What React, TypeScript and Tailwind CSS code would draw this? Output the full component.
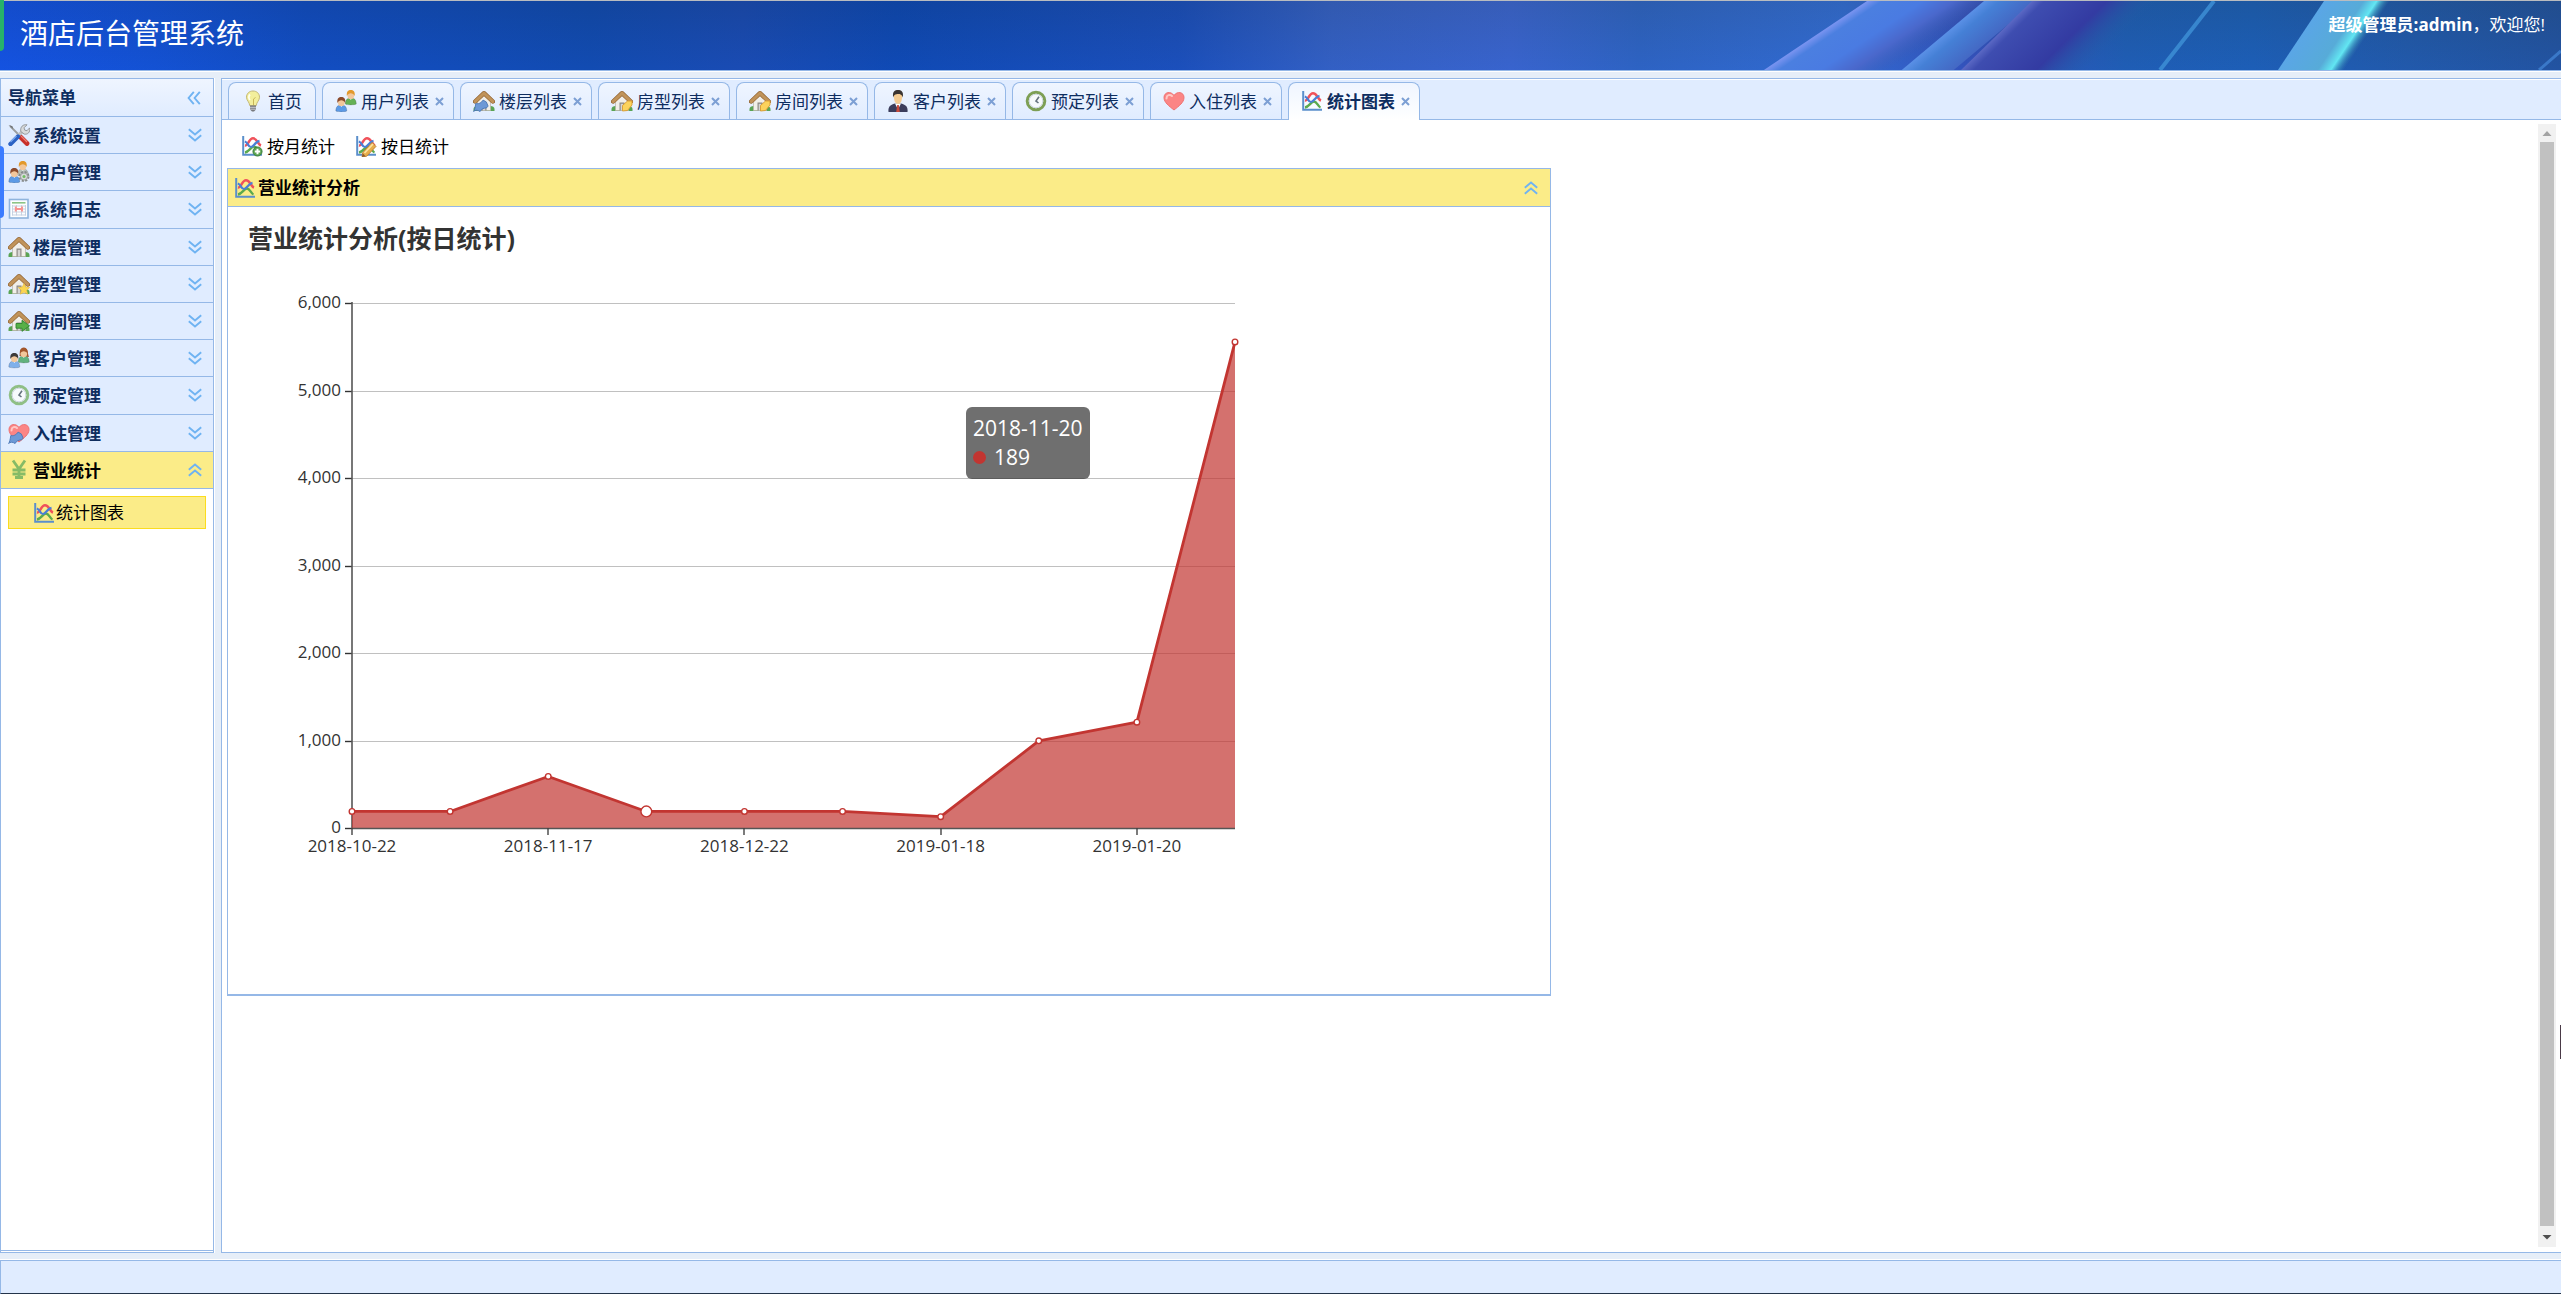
import { useState, type ReactNode } from "react";
import clsx from "clsx";

const House = ({ children }: { children?: ReactNode }) => (
  <>
    <path d="M.5 19c0-2 2-3 4-3h13c2 0 4 1 4 3v2H.5z" fill="#5aa454" />
    <path d="M4.5 10L11 4l6.5 6v10.5h-13z" fill="#f1efe9" stroke="#b9b2a5" strokeWidth=".7" />
    <path d="M8.500 12.500h5v8h-5z" fill="#8d8b86" />
    <path d="M9.700 13.800h2.600v6.700H9.700z" fill="#d5d4d2" />
    <path d="M2.200 11.500L11 3.200l8.800 8.300" fill="none" stroke="#8a5a26" strokeWidth="4.4" strokeLinejoin="round" strokeLinecap="round" />
    <path d="M2.200 11.500L11 3.200l8.800 8.300" fill="none" stroke="#c0935a" strokeWidth="3.2" strokeLinejoin="round" strokeLinecap="round" />
    {children}
  </>
);

const Pencil = () => (
  <>
    <path d="M7.500 17.800L17 7.400l4 4-9.300 9.800-4.500.8z" fill="#e8ae4c" stroke="#b97f35" strokeWidth=".9" />
    <path d="M9.500 18l8.500-9" stroke="#fbe3a0" strokeWidth="1.8" />
    <path d="M6.800 22l1.200-3.400 2.500 2.600z" fill="#8c5a2c" />
  </>
);

const Bell = () => (
  <path d="M.6 21.500c1.200-1.500 1.500-4 2.200-8 2.600.6 5-.2 7.300-3.400l3.200 1.800 1.800 4.200-1.600 1.800c-3 .2-5 .8-6.400 3.600-2.500-1.800-5-1.500-6.500 0z" fill="#6d99d6" stroke="#4a76b4" strokeWidth=".9" />
);

const Graph = ({ children }: { children?: ReactNode }) => (
  <>
    <path d="M2.200 1v18.700H21" fill="none" stroke="#5b8fcb" strokeWidth="2" />
    <path d="M4 17.500C8 17 10 11.500 13 11.500s4 5 6.500 6" fill="none" stroke="#5caa4e" strokeWidth="2.400" />
    <path d="M4 10.500C7 11 8 3.300 12 3.300S17 9.500 20 10.500" fill="none" stroke="#f0525a" strokeWidth="2.600" />
    <path d="M3.800 6.500c3.400 1 3.200 5.500 6.200 5.500s4-5.500 8.500-6.200" fill="none" stroke="#4a7fd6" strokeWidth="2.200" />
    {children}
  </>
);

const Person = ({ x, y, hair, shirt }: { x: number; y: number; hair: string; shirt: string }) => (
  <g transform={`translate(${x} ${y})`}>
    <path d="M.3 14c0-4 1.700-6 5.500-6s5.500 2 5.500 6c-2 1.200-9 1.200-11 0z" fill={shirt} stroke="#00000040" strokeWidth=".6" />
    <path d="M4.400 8l1.400 2 1.400-2z" fill="#fff" />
    <ellipse cx="5.800" cy="5.200" rx="3.400" ry="3.900" fill="#f2c79b" />
    <path d="M1.900 6C1.300 1.500 3.300 0 5.800 0s4.500 1.500 3.900 6C8.800 4 7.400 3.200 5.800 3.200S2.800 4 1.900 6z" fill={hair} />
  </g>
);

const Clock = ({ rim }: { rim: string }) => (
  <>
    <circle cx="11" cy="11" r="8.800" fill="#f7fafc" stroke={rim} strokeWidth="3" />
    <circle cx="11" cy="11" r="6.800" fill="none" stroke="#ccd6e0" strokeWidth="1" />
    <path d="M14 6.800L11 11l2.500 2" fill="none" stroke="#65727e" strokeWidth="1.600" />
  </>
);

const Heart = ({ children }: { children?: ReactNode }) => (
  <>
    <path d="M11 20C6 16 1 12.500 1 7.500 1 2 8 .8 11 5.500 14 .8 21 2 21 7.500c0 5-5 8.500-10 12.500z" fill="#fb8585" stroke="#ef7272" />
    <path d="M3.500 8.500c0-3.500 3.500-4.500 5.500-2.500" fill="none" stroke="#ffc7c4" strokeWidth="2" strokeLinecap="round" />
    {children}
  </>
);

const drawings: Record<string, ReactNode> = {
  bulb: (
    <>
      <path d="M11 1c-4 0-6.500 2.800-6.500 6.200 0 3.300 3 4.800 3.200 8.300h6.600c.2-3.500 3.200-5 3.200-8.300C17.500 3.800 15 1 11 1z" fill="#f3ef9c" stroke="#c4b878" />
      <path d="M8 4.500c-1.500 1.500-1.300 4 0 5.500" stroke="#fffff0" strokeWidth="1.800" fill="none" />
      <path d="M11.500 15V9l2-1.500" stroke="#c9b75a" fill="none" />
      <path d="M8 15.500h6v4l-2 2h-2l-2-2z" fill="#77797d" />
      <path d="M8 17.300h6M8 19.200h6" stroke="#c9cbd0" />
    </>
  ),
  users: (
    <>
      <Person x={10} y={0} hair="#e2992c" shirt="#65b155" />
      <Person x={0.500} y={7} hair="#8c4a2b" shirt="#5c9ae6" />
    </>
  ),
  usersGear: (
    <>
      <Person x={9} y={0} hair="#e2992c" shirt="#b7c0b8" />
      <Person x={0.500} y={7} hair="#8c4a2b" shirt="#5c9ae6" />
      <circle cx="16" cy="15.500" r="4.200" fill="#d6d8d8" stroke="#858a8b" strokeWidth="2.600" strokeDasharray="2 1.300" />
      <circle cx="16" cy="15.500" r="3.600" fill="#d6d8d8" stroke="#9a9e9f" />
      <circle cx="16" cy="15.500" r="1.500" fill="#6fbd62" />
    </>
  ),
  couple: (
    <>
      <path d="M11.500 9c.7-3 .2-8.500 4.300-8.500S19.500 6 21 10z" fill="#a2562c" />
      <Person x={10} y={1} hair="#a2562c" shirt="#62b27e" />
      <Person x={0.500} y={6} hair="#3d3a3a" shirt="#7fb0ea" />
    </>
  ),
  suit: (
    <>
      <path d="M1.500 22c-.6-5 1.500-7.300 6.500-8.500h6c5 1.200 7.100 3.500 6.500 8.500z" fill="#3b3d5c" />
      <path d="M8 13.500l3 6 3-6z" fill="#fff" />
      <path d="M10.200 15h1.600l1 7H9.200z" fill="#c84a3c" />
      <path d="M6.800 5c0-2.500 8.400-2.500 8.400 0 0 5-1.200 9-4.200 9S6.800 10 6.800 5z" fill="#f4cb92" />
      <path d="M6.300 7.500C5 1.500 8 0 11 0s6 1.500 4.700 7.500C15 4.500 13 4 11 4s-4 .5-4.700 3.500z" fill="#3a3431" />
    </>
  ),
  tools: (
    <>
      <path d="M2 2l10 10" stroke="#9b9d9f" strokeWidth="1.800" />
      <path d="M.5 1l4 1.200L5.200 5z" fill="#6f7275" />
      <path d="M11.500 12l7.500 7.500" stroke="#c7302b" strokeWidth="4.800" strokeLinecap="round" />
      <path d="M13 12l6 6" stroke="#f07d70" strokeWidth="1.200" />
      <path d="M9 12.500L16 6" stroke="#bfc2c4" strokeWidth="3.200" />
      <path d="M19 .8l-3 3 .8 2.400 2.200.5 2.600-2.800c.9 4.500-2 6.800-5.400 6.200l-3.400-2.600C12 3 15 0 19 .8z" fill="#d8dadb" stroke="#8c9092" strokeWidth=".9" />
      <path d="M10 12.500l-7.500 7.500" stroke="#2b62c4" strokeWidth="4.400" strokeLinecap="round" />
      <path d="M8.500 12l-6 6" stroke="#7ba8ef" strokeWidth="1.200" />
    </>
  ),
  log: (
    <>
      <rect x="1.500" y="1.500" width="18.500" height="18.500" fill="#fdfeff" stroke="#8fb4dd" strokeWidth="1.600" />
      <path d="M4 4.800h13.500" stroke="#8cc486" strokeWidth="1.600" />
      <path d="M4 8h14M4 11h14M4 14h14M4 17h14M4.500 7v10.500M8.500 7v10.500M13.500 7v10.500M17.500 7v10.500" stroke="#c3cfdf" strokeWidth=".9" />
      <path d="M7.800 8.500v5M14 8.500v5M7.800 11h6.400" stroke="#f7928e" strokeWidth="1.900" />
    </>
  ),
  house: <House />,
  houseStar: (
    <House>
      <path d="M16 10.500l1.700 3.600 4 .4-3 2.700.9 4-3.600-2.100-3.600 2.100.9-4-3-2.700 4-.4z" fill="#fbd651" stroke="#e9b93b" strokeWidth=".6" />
    </House>
  ),
  houseArrow: (
    <House>
      <path d="M8 13.500h6v-3.200l7.500 5.500-7.500 5.500V18.200H8z" fill="#58b048" stroke="#2f8530" strokeWidth=".9" />
    </House>
  ),
  houseBell: (
    <House>
      <Bell />
    </House>
  ),
  housePencil: (
    <House>
      <path d="M11.500 21v-5.500l5-4.500h4.500v4l-4.500 5.500z" fill="#fbd35c" stroke="#d99b31" strokeWidth=".9" />
    </House>
  ),
  clock: <Clock rim="#7d9f55" />,
  clockLight: <Clock rim="#8fbf86" />,
  heart: <Heart />,
  heartBell: (
    <Heart>
      <Bell />
    </Heart>
  ),
  yen: (
    <path d="M5 1.500l6 8.500 6-8.500M11 10v9M4.500 11h13M4.500 15h13M7 18.500h8" fill="none" stroke="#86bb66" strokeWidth="2.800" />
  ),
  graph: <Graph />,
  graphAdd: (
    <Graph>
      <circle cx="16.500" cy="16.500" r="4.600" fill="#5aa350" stroke="#2f7431" strokeWidth=".8" />
      <path d="M16.500 13.800v5.400M13.800 16.500h5.400" stroke="#fff" strokeWidth="2" />
    </Graph>
  ),
  graphEdit: (
    <Graph>
      <Pencil />
    </Graph>
  ),
};

const Icon = ({ name }: { name: string }) => (
  <svg viewBox="0 0 22 22" className="size-[22px] shrink-0" aria-hidden="true">
    {drawings[name]}
  </svg>
);

const Chevrons = ({ className }: { className?: string }) => (
  <svg viewBox="0 0 14 14" className={clsx("size-[14px] shrink-0", className)} aria-hidden="true">
    <path d="M.8 1.200L7 6.400l6.200-5.200M.8 7.200L7 12.400l6.200-5.200" fill="none" stroke="#6fb3f2" strokeWidth="1.900" />
  </svg>
);

const menus = [
  { title: "系统设置", icon: "tools" },
  { title: "用户管理", icon: "usersGear" },
  { title: "系统日志", icon: "log" },
  { title: "楼层管理", icon: "house" },
  { title: "房型管理", icon: "houseStar" },
  { title: "房间管理", icon: "houseArrow" },
  { title: "客户管理", icon: "couple" },
  { title: "预定管理", icon: "clockLight" },
  { title: "入住管理", icon: "heartBell" },
  { title: "营业统计", icon: "yen" },
];

const tabs = [
  { title: "首页", icon: "bulb" },
  { title: "用户列表", icon: "users" },
  { title: "楼层列表", icon: "houseBell" },
  { title: "房型列表", icon: "housePencil" },
  { title: "房间列表", icon: "housePencil" },
  { title: "客户列表", icon: "suit" },
  { title: "预定列表", icon: "clock" },
  { title: "入住列表", icon: "heart" },
  { title: "统计图表", icon: "graph" },
];

const Banner = () => (
  <svg viewBox="0 0 2561 69" preserveAspectRatio="none" className="absolute inset-0 h-full w-full" aria-hidden="true">
    <defs>
      <linearGradient id="sky">
        <stop offset="0" stopColor="#1551df" />
        <stop offset=".06" stopColor="#1450cf" />
        <stop offset=".12" stopColor="#124ab8" />
        <stop offset=".23" stopColor="#1248a4" />
        <stop offset=".29" stopColor="#1c48a6" />
        <stop offset=".35" stopColor="#0f46a8" />
        <stop offset=".46" stopColor="#1e4db0" />
        <stop offset=".52" stopColor="#3c62bb" />
        <stop offset=".59" stopColor="#4367c7" />
        <stop offset=".64" stopColor="#3566ba" />
        <stop offset=".72" stopColor="#3a70cc" />
        <stop offset=".77" stopColor="#3c50b0" />
        <stop offset=".83" stopColor="#235fa8" />
        <stop offset=".88" stopColor="#2060aa" />
        <stop offset=".94" stopColor="#265a9c" />
        <stop offset="1" stopColor="#27528f" />
      </linearGradient>
      <linearGradient id="depth" x2="0" y2="1">
        <stop offset="0" stopColor="#0d3a86" stopOpacity=".22" />
        <stop offset="1" stopColor="#1258e6" stopOpacity=".22" />
      </linearGradient>
      <linearGradient id="beam">
        <stop offset="0" stopColor="#7a94f0" />
        <stop offset=".12" stopColor="#4b7fe0" />
        <stop offset=".45" stopColor="#4a7be2" />
        <stop offset=".7" stopColor="#4a68cc" />
        <stop offset="1" stopColor="#3f5cb8" stopOpacity="0" />
      </linearGradient>
      <linearGradient id="steel">
        <stop offset="0" stopColor="#5a90e6" />
        <stop offset=".3" stopColor="#4580d6" />
        <stop offset="1" stopColor="#4468c4" />
      </linearGradient>
      <linearGradient id="violet">
        <stop offset="0" stopColor="#5a68c4" />
        <stop offset=".1" stopColor="#3e4db0" />
        <stop offset=".6" stopColor="#333ba2" />
        <stop offset="1" stopColor="#235ea6" stopOpacity="0" />
      </linearGradient>
      <linearGradient id="aqua">
        <stop offset="0" stopColor="#5aa6e6" />
        <stop offset=".6" stopColor="#57abd8" />
        <stop offset=".8" stopColor="#62e6f2" />
        <stop offset="1" stopColor="#3a8ab0" stopOpacity="0" />
      </linearGradient>
    </defs>
    <rect width="2561" height="69" fill="url(#sky)" />
    <rect width="2561" height="69" fill="url(#depth)" />
    <rect x="1867" width="125" height="69" fill="url(#beam)" transform="skewX(-56.2)" />
    <rect x="1984" width="52" height="69" fill="url(#steel)" transform="skewX(-50)" />
    <rect x="2032" width="125" height="69" fill="url(#violet)" transform="skewX(-45.800)" />
    <path d="M2214 0l-54 69" stroke="#3f92d8" strokeWidth="4" opacity=".8" />
    <rect x="2324" width="66" height="69" fill="url(#aqua)" transform="skewX(-33.700)" />
    <path d="M2561 50l-22 19" stroke="#3a78c8" strokeWidth="3" />
  </svg>
);

const points = [
  { day: "2018-10-22", value: 189 },
  { day: "2018-10-23", value: 189 },
  { day: "2018-11-17", value: 589 },
  { day: "2018-11-20", value: 189 },
  { day: "2018-12-22", value: 189 },
  { day: "2018-12-23", value: 189 },
  { day: "2019-01-18", value: 129 },
  { day: "2019-01-19", value: 996 },
  { day: "2019-01-20", value: 1209 },
  { day: "2019-01-21", value: 5555 },
];

const LEFT = 124;
const RIGHT = 1007;
const TOP = 96;
const BASE = 621;
const px = (i: number) => LEFT + (i * (RIGHT - LEFT)) / (points.length - 1);
const py = (v: number) => BASE - (v * (BASE - TOP)) / 6000;

const Chart = () => {
  const [active] = useState(3);
  const line = points.map((p, i) => `${px(i)},${py(p.value)}`).join(" ");
  return (
    <div className="relative h-[787px]">
      <svg width="1100" height="780" className="block" role="img" aria-label="营业统计分析(按日统计)">
        <text x="20" y="41" className="fill-[#333] text-[25px] font-bold">
          营业统计分析(按日统计)
        </text>
        {[0, 1000, 2000, 3000, 4000, 5000, 6000].map((v) => (
          <g key={v}>
            <path d={`M${LEFT} ${Math.round(py(v)) + 0.5}H${RIGHT}`} stroke="#c0c0c0" strokeWidth="1.200" />
            <path d={`M${LEFT - 7} ${Math.round(py(v)) + 0.5}h7`} stroke="#333" strokeWidth="1.400" />
            <text x={LEFT - 11} y={Math.round(py(v)) + 5} textAnchor="end" className="fill-[#333] text-[17px]">
              {v.toLocaleString("en-US")}
            </text>
          </g>
        ))}
        <path d={`M${LEFT} ${TOP - 1}V${BASE + 1}`} stroke="#555" strokeWidth="1.600" />
        <polygon points={`${LEFT},${BASE} ${line} ${RIGHT},${BASE}`} fill="#c23531" opacity=".7" />
        <path d={`M${LEFT} ${BASE + 0.5}H${RIGHT}`} stroke="#555" strokeWidth="1.600" />
        {points.map((p, i) =>
          i % 2 === 0 ? (
            <g key={p.day}>
              <path d={`M${Math.round(px(i))} ${BASE}v7`} stroke="#444" strokeWidth="1.400" />
              <text x={px(i)} y={BASE + 24} textAnchor="middle" className="fill-[#333] text-[17px]">
                {p.day}
              </text>
            </g>
          ) : null,
        )}
        <polyline points={line} fill="none" stroke="#c23531" strokeWidth="2.800" strokeLinejoin="bevel" />
        {points.map((p, i) => (
          <circle key={p.day} cx={px(i)} cy={py(p.value)} r={i === active ? 5.4 : 2.8} fill="#fff" stroke="#c23531" strokeWidth="1.400" />
        ))}
      </svg>
      <div className="absolute top-[200px] left-[738px] rounded-md bg-[#323232]/70 p-[7px] text-[21px] leading-[29px] text-white">
        <div>{points[active].day}</div>
        <div className="flex items-center gap-2">
          <span className="size-[13px] rounded-full bg-[#c23531]" />
          {points[active].value}
        </div>
      </div>
    </div>
  );
};

export default function App() {
  const [current, setCurrent] = useState("统计图表");
  return (
    <div className="relative flex h-screen flex-col overflow-hidden bg-[#e6eef8] font-['Open_Sans','Noto_Sans_CJK_SC',sans-serif] text-[17px] leading-6 text-black">
      <header className="relative flex h-[71px] shrink-0 items-start justify-between border-t border-b border-t-[#b9bcc0] border-b-[#95b8e7] text-white">
        <Banner />
        <h1 className="relative pt-3 pl-5 text-[28px] leading-10">酒店后台管理系统</h1>
        <p className="relative pt-3 pr-4">
          <b>超级管理员:admin</b>，欢迎您!
        </p>
      </header>

      <div className="flex min-h-0 flex-1 border-t border-b border-white py-[6px]">
        <aside className="flex w-[214px] shrink-0 flex-col border border-[#95b8e7] bg-white pb-px">
          <div className="flex h-[38px] shrink-0 items-center justify-between border-b border-[#95b8e7] bg-linear-to-b from-[#eff5ff] to-[#e0ecff] pt-px pr-3 pl-[7px] font-bold text-[#0e2d5f]">
            <h2>导航菜单</h2>
            <button aria-label="收起菜单">
              <Chevrons className="rotate-90" />
            </button>
          </div>
          <nav className="flex flex-1 flex-col border-b border-[#95b8e7]">
            <div className="grid h-[372px] grid-rows-10">
              {menus.map((m) => {
                const open = m.title === "营业统计";
                return (
                  <button
                    key={m.title}
                    className={clsx(
                      "flex min-h-0 items-center gap-[3px] border-b border-[#95b8e7] pr-[11px] pl-[7px] font-bold",
                      open ? "bg-[#fbec88] text-black" : "bg-[#e0ecff] text-[#0e2d5f]",
                    )}
                  >
                    <Icon name={m.icon} />
                    <span className="flex-1 pt-[2px] text-left">{m.title}</span>
                    <Chevrons className={clsx(open && "rotate-180")} />
                  </button>
                );
              })}
            </div>
            <a href="#chart" className="mx-[7px] mt-[7px] flex h-[33px] items-center gap-px border border-[#fbdc1e] bg-[#fbec88] pl-6">
              <Icon name="graph" />
              统计图表
            </a>
          </nav>
        </aside>

        <main className="ml-[7px] flex min-w-0 flex-1 flex-col border border-r-0 border-[#95b8e7] bg-white shadow-[-6px_0_0_#e6eef8,-7px_0_0_white]">
          <ul className="mt-px flex h-10 shrink-0 items-end gap-[6px] border-b border-[#95b8e7] bg-[#e0ecff] pl-[6px]">
            {tabs.map((t) => {
              const on = t.title === current;
              return (
                <li
                  key={t.title}
                  className={clsx(
                    "flex h-[37px] items-center rounded-t-lg border border-b-0 border-[#95b8e7] bg-linear-to-b from-[#eff5ff]",
                    on ? "-mb-px h-[38px] to-white pb-px font-bold" : "to-[#e0ecff]",
                    t.title === "首页" ? "px-[13px]" : "pr-[9px] pl-3",
                  )}
                >
                  <button className="flex items-center gap-1 text-[#0e2d5f]" onClick={() => setCurrent(t.title)}>
                    <Icon name={t.icon} />
                    <span className="pt-[2px]">{t.title}</span>
                  </button>
                  {t.title !== "首页" && (
                    <button aria-label={`关闭${t.title}`} className="ml-[6px]">
                      <svg viewBox="0 0 9 9" className="size-[9px]">
                        <path d="M1 1l7 7M8 1L1 8" stroke="#7c9fd4" strokeWidth="2" />
                      </svg>
                    </button>
                  )}
                </li>
              );
            })}
          </ul>

          <div className="flex min-h-0 flex-1 px-[5px] pt-1 pb-[5px]">
            <div className="min-w-0 flex-1">
              <div className="flex h-11 items-center gap-5 pl-[14px]">
                <button className="flex items-center gap-1">
                  <Icon name="graphAdd" />
                  <span className="pt-[2px]">按月统计</span>
                </button>
                <button className="flex items-center gap-1">
                  <Icon name="graphEdit" />
                  <span className="pt-[2px]">按日统计</span>
                </button>
              </div>
              <section id="chart" className="max-w-[1324px] border border-b-2 border-[#95b8e7]">
                <div className="flex h-[38px] items-center gap-[2px] border-b border-[#95b8e7] bg-[#fbec88] pr-3 pl-[6px]">
                  <Icon name="graph" />
                  <h2 className="flex-1 font-bold">营业统计分析</h2>
                  <button aria-label="折叠">
                    <Chevrons className="rotate-180" />
                  </button>
                </div>
                <Chart />
              </section>
            </div>
            <div className="flex w-[18px] flex-col items-center bg-[#f1f1f1]" aria-hidden="true">
              <svg viewBox="0 0 18 18" className="size-[18px]">
                <path d="M9 7l4.500 5h-9z" fill="#a3a3a3" />
              </svg>
              <div className="w-[14px] flex-1 bg-[#c1c1c1]" />
              <svg viewBox="0 0 18 21" className="h-[21px] w-[18px]">
                <path d="M9 13.500L4.500 9h9z" fill="#505050" />
              </svg>
            </div>
          </div>
        </main>
      </div>

      <footer className="h-[34px] shrink-0 border border-r-0 border-[#95b8e7] border-b-[#24344a] bg-[#e0ecff]" />

      <div className="absolute top-0 left-0 h-[51px] w-1 rounded-br-sm bg-[#27b26a]" />
      <div className="absolute top-[146px] left-0 h-[72px] w-1 rounded-r-sm bg-[#3b7cff]" />
      <div className="absolute top-[1025px] right-0 h-[34px] w-px bg-[#4a3a48]" />
    </div>
  );
}
